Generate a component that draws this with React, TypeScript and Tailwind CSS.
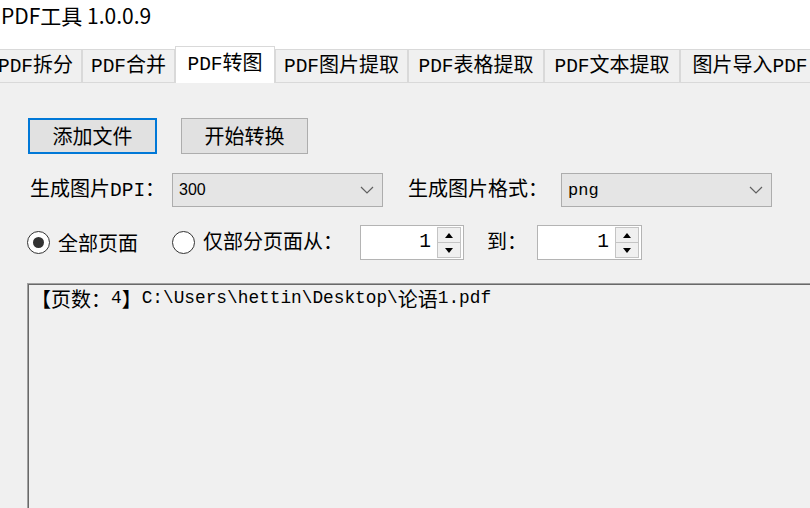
import React from "react";

const CJK_SPLIT = /([\u3000-\u303f\u3400-\u9fff\uff00-\uffef]+)/;
const CJK_TEST = /[\u3000-\u303f\u3400-\u9fff\uff00-\uffef]/;

function T({ s, small = false }: { s: string; small?: boolean }) {
  return (
    <>
      {s
        .split(CJK_SPLIT)
        .filter(Boolean)
        .map((p, i) =>
          CJK_TEST.test(p) ? (
            <span
              key={i}
              className="font-['Noto_Sans_CJK_SC',sans-serif] text-[20px] leading-none"
            >
              {p}
            </span>
          ) : (
            <span
              key={i}
              className={
                small
                  ? "font-['Liberation_Mono',monospace] text-[17.8px] leading-none"
                  : "font-['Liberation_Mono',monospace] text-[19.5px] leading-none"
              }
            >
              {p}
            </span>
          )
        )}
    </>
  );
}

function Tab({ label, w, active = false }: { label: string; w: string; active?: boolean }) {
  return (
    <div
      className={
        active
          ? `relative z-10 -mb-px flex h-[37px] ${w} shrink-0 items-center justify-center border border-b-0 border-[#d9d9d9] bg-white pb-[2px] text-black`
          : `flex h-[33px] ${w} shrink-0 items-center justify-center border border-b-0 border-[#d9d9d9] bg-[#f0f0f0] text-black`
      }
    >
      <span className="whitespace-nowrap">
        <T s={label} />
      </span>
    </div>
  );
}

function Chevron() {
  return (
    <svg width="14" height="8" viewBox="0 0 14 8" className="shrink-0">
      <path d="M1 1 L7 7 L13 1" fill="none" stroke="#606060" strokeWidth="1.2" />
    </svg>
  );
}

function Radio({ checked }: { checked: boolean }) {
  return (
    <div className="flex h-[23px] w-[23px] shrink-0 items-center justify-center rounded-full border border-[#333333] bg-white">
      {checked && <div className="h-[11px] w-[11px] rounded-full bg-[#333333]" />}
    </div>
  );
}

function Spin({ w }: { w: string }) {
  return (
    <div className={`flex h-[35px] ${w} shrink-0 items-center border border-[#b4b4b4] bg-white pr-[2px]`}>
      <div className="flex flex-1 items-center justify-end pr-[6px] text-black">
        <T s="1" />
      </div>
      <div className="flex h-[31px] w-[24px] flex-col">
        <div className="flex flex-1 items-center justify-center border border-[#c4c4c4] bg-[#f0f0f0]">
          <svg width="8" height="5" viewBox="0 0 8 5">
            <path d="M0 5 L4 0 L8 5 Z" fill="#000" />
          </svg>
        </div>
        <div className="flex flex-1 items-center justify-center border border-t-0 border-[#c4c4c4] bg-[#f0f0f0]">
          <svg width="8" height="5" viewBox="0 0 8 5">
            <path d="M0 0 L4 5 L8 0 Z" fill="#000" />
          </svg>
        </div>
      </div>
    </div>
  );
}

export default function App() {
  return (
    <div className="h-[508px] w-[810px] overflow-hidden bg-white text-black">
      {/* title */}
      <div className="h-[46px] pl-[1px] font-['Noto_Sans_CJK_SC',sans-serif] text-[21px] leading-[30px]">
        PDF工具 1.0.0.9
      </div>

      {/* tabs */}
      <div className="-ml-[11px] flex items-end">
        <Tab label="PDF拆分" w="w-[93px]" />
        <Tab label="PDF合并" w="w-[93px]" />
        <Tab label="PDF转图" w="w-[100px]" active />
        <Tab label="PDF图片提取" w="w-[133px]" />
        <Tab label="PDF表格提取" w="w-[136px]" />
        <Tab label="PDF文本提取" w="w-[136px]" />
        <Tab label="图片导入PDF" w="w-[140px]" />
      </div>

      {/* panel */}
      <div className="h-[440px] border-t border-[#d9d9d9] bg-[#f0f0f0] pt-[35px]">
        {/* buttons */}
        <div className="flex gap-[24px] pl-[28px]">
          <div className="flex h-[36px] w-[129px] items-center justify-center border-2 border-[#0078d7] bg-[#e1e1e1] font-['Noto_Sans_CJK_SC',sans-serif] text-[20px] leading-none">
            添加文件
          </div>
          <div className="flex h-[36px] w-[127px] items-center justify-center border border-[#adadad] bg-[#e1e1e1] font-['Noto_Sans_CJK_SC',sans-serif] text-[20px] leading-none">
            开始转换
          </div>
        </div>

        {/* dpi / format row */}
        <div className="mt-[19px] flex items-center pl-[28px]">
          <div className="w-[144px] shrink-0 whitespace-nowrap pl-[2px]">
            <T s="生成图片DPI：" />
          </div>
          <div className="flex h-[34px] w-[211px] shrink-0 items-center justify-between border border-[#adadad] bg-[#e5e5e5] pl-[6px] pr-[8px]">
            <span className="font-['Liberation_Sans',sans-serif] text-[16px] leading-none">300</span>
            <Chevron />
          </div>
          <div className="ml-[25px] w-[153px] shrink-0 whitespace-nowrap">
            <T s="生成图片格式：" />
          </div>
          <div className="flex h-[34px] w-[211px] shrink-0 items-center justify-between border border-[#adadad] bg-[#e5e5e5] pl-[6px] pr-[8px]">
            <span className="font-['Liberation_Mono',monospace] text-[17px] leading-none">png</span>
            <Chevron />
          </div>
        </div>

        {/* radio row */}
        <div className="mt-[18px] flex items-center pl-[27px]">
          <div className="flex w-[145px] shrink-0 items-center gap-[8px]">
            <Radio checked />
            <T s="全部页面" />
          </div>
          <div className="flex w-[188px] shrink-0 items-center gap-[8px]">
            <Radio checked={false} />
            <span className="whitespace-nowrap">
              <T s="仅部分页面从：" />
            </span>
          </div>
          <Spin w="w-[104px]" />
          <div className="ml-[23px] w-[50px] shrink-0">
            <T s="到：" />
          </div>
          <Spin w="w-[105px]" />
        </div>

        {/* log area */}
        <div className="ml-[27px] mt-[23px] h-[260px] w-[800px] border-l border-t border-[#a0a0a0]">
          <div className="h-full w-full border-l border-t border-[#696969] bg-[#f0f0f0] pl-[2px] pt-[3px]">
            <div className="flex h-[22px] items-center whitespace-nowrap">
              <T s="【页数：4】C:\Users\hettin\Desktop\论语1.pdf" small />
            </div>
          </div>
        </div>
      </div>
    </div>
  );
}
